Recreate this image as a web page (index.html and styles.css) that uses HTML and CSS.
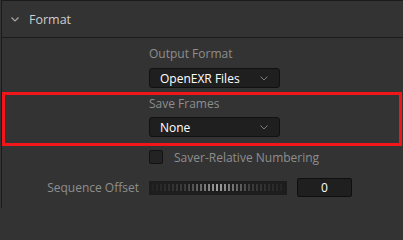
FILE: index.html
```html
<!DOCTYPE html>
<html>
<head>
<meta charset="utf-8">
<link rel="stylesheet" href="styles.css">
</head>
<body>
<div class="panel">
  <div class="header">
    <svg class="chev-head" width="8" height="5" viewBox="0 0 8 5"><path d="M0.5 0.5 L4 4 L7.5 0.5" fill="none" stroke="#a8a8a8" stroke-width="1.2"/></svg>
    <span class="title">Format</span>
  </div>
  <div class="content">
    <div class="field first">
      <div class="label">Output Format</div>
      <div class="dropdown"><span>OpenEXR Files</span><svg width="8" height="5" viewBox="0 0 8 5"><path d="M0.5 0.5 L4 4 L7.5 0.5" fill="none" stroke="#7c7c7c" stroke-width="1"/></svg></div>
    </div>
    <div class="field highlight">
      <div class="label">Save Frames</div>
      <div class="dropdown gap5"><span>None</span><svg width="8" height="5" viewBox="0 0 8 5"><path d="M0.5 0.5 L4 4 L7.5 0.5" fill="none" stroke="#7c7c7c" stroke-width="1"/></svg></div>
    </div>
    <div class="check-row">
      <span class="checkbox"></span>
      <span class="label">Saver-Relative Numbering</span>
    </div>
    <div class="slider-row">
      <span class="label right">Sequence Offset</span>
      <div class="slider"><div class="ticks"></div></div>
      <div class="numbox">0</div>
    </div>
  </div>
</div>
</body>
</html>
```
FILE: styles.css
```css
html, body {
  margin: 0;
  padding: 0;
  background: #333333;
  font-family: "Open Sans", "DejaVu Sans", sans-serif;
  font-size: 12px;
  height: 208px;
  overflow: hidden;
}
.panel {
  margin-left: 1px;
  border-left: 1px solid #1b1b1b;
  border-top: 1px solid #1b1b1b;
  height: 207px;
}
.header {
  border-bottom: 1px solid #1b1b1b;
  display: flex;
  align-items: center;
  padding-top: 1px;
  box-sizing: border-box;
  height: 37px;
}
.chev-head {
  margin-left: 9px;
  margin-right: 10px;
}
.title {
  color: #cdcdcd;
  font-size: 12.5px;
  line-height: 17px;
}
.label {
  color: #8e8e8e;
  line-height: 17px;
}
.field {
  padding-left: 147px;
}
.field.first {
  padding-top: 7px;
}
.dropdown {
  margin-top: 6px;
  width: 131px;
  height: 20px;
  box-sizing: border-box;
  border: 1px solid #111111;
  border-radius: 3px;
  background: #1f1f1f;
  display: flex;
  align-items: center;
  justify-content: space-between;
  padding: 0 11px 0 10px;
  color: #ffffff;
  font-weight: 500;
  font-size: 12px;
}
.dropdown.gap5 {
  margin-top: 5px;
}
.highlight {
  margin-top: 4px;
  margin-right: 1px;
  border: 3px solid #f0161a;
  padding-left: 144px;
  padding-bottom: 6px;
}
.check-row {
  margin-top: 3px;
  padding-left: 147px;
  display: flex;
  height: 17px;
}
.checkbox {
  margin-top: 1px;
  width: 14px;
  height: 14px;
  box-sizing: border-box;
  background: #232323;
  border: 1px solid #121212;
  border-radius: 2px;
  margin-right: 11px;
}
.slider-row {
  margin-top: 12px;
  display: flex;
  align-items: center;
  height: 19px;
}
.label.right {
  width: 137px;
  text-align: right;
  margin-right: 10px;
}
.slider {
  width: 138px;
  height: 14px;
  background: #1d1d1d;
  padding: 3px 3px 4px 3px;
  box-sizing: border-box;
}
.ticks {
  height: 7px;
  background: linear-gradient(90deg, #232323 0%, #3c3c3c 25%, #a0a0a0 50%, #3c3c3c 75%, #232323 100%);
  -webkit-mask-image: repeating-linear-gradient(90deg, #000 0 2px, transparent 2px 4px);
  mask-image: repeating-linear-gradient(90deg, #000 0 2px, transparent 2px 4px);
}
.numbox {
  margin-left: 10px;
  width: 55px;
  height: 19px;
  box-sizing: border-box;
  background: #1f1f1f;
  border: 1px solid #0f0f0f;
  border-radius: 2px;
  color: #ffffff;
  font-weight: 500;
  text-align: center;
  line-height: 17px;
}
```
